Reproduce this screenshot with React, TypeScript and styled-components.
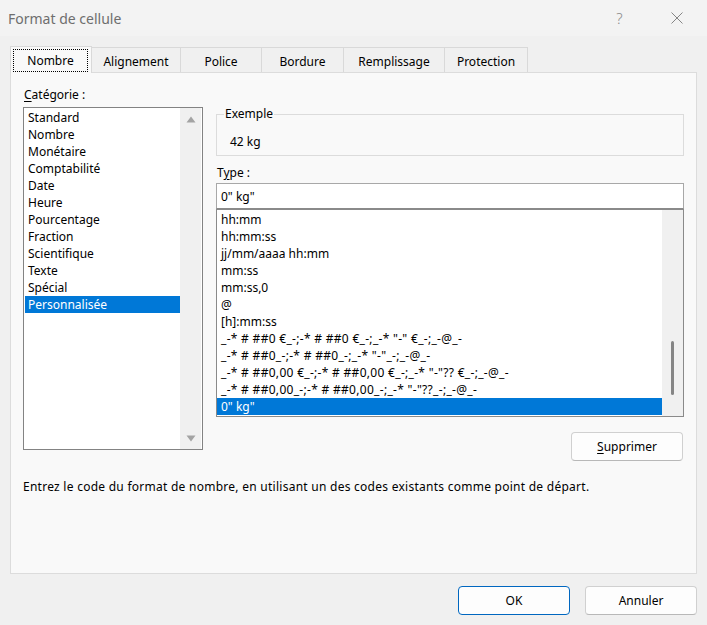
import React from "react";
import styled, {createGlobalStyle} from "styled-components";

const GlobalStyle = createGlobalStyle`
    html, body {
        margin: 0;
        padding: 0;
        background: #f0f0f0;
    }
    body {
        font-family: "Noto Sans", "Open Sans", sans-serif;
        font-size: 12px;
        color: #000;
    }
    * {
        box-sizing: border-box;
    }
`;

const Window = styled.div`
    width: 707px;
    height: 625px;
    display: flex;
    flex-direction: column;
    background: #f0f0f0;
    overflow: hidden;
`;

const TitleBar = styled.div`
    height: 36px;
    display: flex;
    align-items: center;
    padding: 0 2px 0 8px;
    background: #f3f3f3;
`;

const Title = styled.div`
    flex: 1;
    font-size: 14px;
    color: #6e6e6e;
`;

const TitleButton = styled.div`
    width: 57px;
    height: 36px;
    display: flex;
    align-items: center;
    justify-content: center;
    color: #8a8a8a;
    font-size: 15px;
    font-weight: 300;
`;

const TabRow = styled.div`
    height: 36px;
    display: flex;
    align-items: flex-end;
    padding: 10px 10px 0;
`;

const Tab = styled.div<{ $w: number; $active?: boolean }>`
    width: ${p => p.$w}px;
    height: ${p => (p.$active ? 27 : 25)}px;
    margin-bottom: ${p => (p.$active ? -1 : 0)}px;
    margin-left: ${p => (p.$active ? 0 : -1)}px;
    position: relative;
    z-index: ${p => (p.$active ? 2 : 1)};
    display: flex;
    align-items: ${p => (p.$active ? "stretch" : "center")};
    justify-content: center;
    padding-top: ${p => (p.$active ? 0 : 3)}px;
    background: ${p => (p.$active ? "#f9f9f9" : "#f0f0f0")};
    border: 1px solid #d9d9d9;
    border-bottom: none;
    line-height: 14px;
    &:first-child {
        margin-left: 0;
    }
`;

const FocusRing = styled.div`
    flex: 1;
    margin: 2px 3px 1px 2px;
    padding-top: 1px;
    border: 1px dotted #000;
    display: flex;
    align-items: center;
    justify-content: center;
`;

const Panel = styled.div`
    height: 502px;
    margin: 0 10px;
    border: 1px solid #dcdcdc;
    background: #f9f9f9;
    padding: 15px 12px 0 12px;
    display: grid;
    grid-template-columns: 180px 1fr;
    grid-template-rows: auto auto;
    column-gap: 13px;
    align-content: start;
`;

const LeftColumn = styled.div`
    display: flex;
    flex-direction: column;
`;

const RightColumn = styled.div`
    display: flex;
    flex-direction: column;
    padding-top: 19px;
`;

const Label = styled.div<{ $gapAbove?: number; $gapBelow: number }>`
    line-height: 14px;
    padding-left: 1px;
    margin-top: ${p => p.$gapAbove ?? 0}px;
    margin-bottom: ${p => p.$gapBelow}px;
`;

const U = styled.span`
    text-decoration: underline;
    text-underline-offset: 2px;
`;

const ListBox = styled.div<{ $h: number; $border: string }>`
    height: ${p => p.$h}px;
    border: 1px solid ${p => p.$border};
    background: #fff;
    display: flex;
`;

const ListItems = styled.div<{ $padLeft: number }>`
    flex: 1;
    padding: 1px 0 1px ${p => p.$padLeft}px;
    overflow: hidden;
`;

const Row = styled.div<{ $selected?: boolean; $indent: number; $spacing?: number }>`
    height: 17px;
    line-height: 17px;
    padding-left: ${p => p.$indent}px;
    white-space: pre;
    letter-spacing: ${p => p.$spacing ?? 0}px;
    background: ${p => (p.$selected ? "#0078d7" : "transparent")};
    color: ${p => (p.$selected ? "#fff" : "#000")};
`;

const ArrowTrack = styled.div`
    width: 21px;
    margin-right: 1px;
    background: #f0f0f0;
    display: flex;
    flex-direction: column;
    justify-content: space-between;
    align-items: center;
    padding: 8px 0 7px;
`;

const ThinTrack = styled.div`
    width: 21px;
    background: #f0f0f0;
    display: flex;
    justify-content: center;
`;

const Thumb = styled.div`
    width: 3px;
    height: 54px;
    margin-top: 131px;
    border-radius: 2px;
    background: #858585;
`;

const GroupBox = styled.fieldset`
    margin: 0;
    border: 1px solid #dcdcdc;
    padding: 14px 13px 6px;
    min-width: 0;
`;

const Legend = styled.legend`
    padding: 0 1px;
    margin-left: -6px;
    line-height: 14px;
`;

const Sample = styled.div`
    line-height: 14px;
`;

const TypeInput = styled.div`
    height: 26px;
    border: 1px solid #a8a8a8;
    border-bottom-color: #8a8a8a;
    background: #fff;
    display: flex;
    align-items: center;
    padding-left: 4px;
`;

const Button = styled.div<{ $primary?: boolean }>`
    width: 112px;
    height: 29px;
    border-radius: 4px;
    border: 1px solid ${p => (p.$primary ? "#0067c0" : "#d0d0d0")};
    border-bottom-color: ${p => (p.$primary ? "#0067c0" : "#b8b8b8")};
    background: #fdfdfd;
    display: flex;
    align-items: center;
    justify-content: center;
    line-height: 14px;
`;

const DeleteButton = styled(Button)`
    align-self: flex-end;
    margin-top: 15px;
    margin-right: 1px;
`;

const HelpText = styled.div`
    grid-column: 1 / span 2;
    margin-top: 18px;
    line-height: 16px;
    letter-spacing: 0.26px;
`;

const Footer = styled.div`
    flex: 1;
    display: flex;
    justify-content: flex-end;
    align-items: flex-start;
    gap: 15px;
    padding: 12px 10px 0 0;
`;

const categories = [
    "Standard", "Nombre", "Monétaire", "Comptabilité", "Date", "Heure",
    "Pourcentage", "Fraction", "Scientifique", "Texte", "Spécial", "Personnalisée",
];

const formats = [
    "hh:mm",
    "hh:mm:ss",
    "jj/mm/aaaa hh:mm",
    "mm:ss",
    "mm:ss,0",
    "@",
    "[h]:mm:ss",
    "_-* # ##0 €_-;-* # ##0 €_-;_-* \"-\" €_-;_-@_-",
    "_-* # ##0_-;-* # ##0_-;_-* \"-\"_-;_-@_-",
    "_-* # ##0,00 €_-;-* # ##0,00 €_-;_-* \"-\"?? €_-;_-@_-",
    "_-* # ##0,00_-;-* # ##0,00_-;_-* \"-\"??_-;_-@_-",
    "0\" kg\"",
];

const tabs = [
    {name: "Nombre", w: 82},
    {name: "Alignement", w: 90},
    {name: "Police", w: 82},
    {name: "Bordure", w: 83},
    {name: "Remplissage", w: 102},
    {name: "Protection", w: 84},
];

function Arrow({up}: { up?: boolean }) {
    return (
        <svg width="10" height="7" viewBox="0 0 10 7">
            <polygon points={up ? "0.5,6.5 9.5,6.5 5,0.5" : "0.5,0.5 9.5,0.5 5,6.5"} fill="#a3a3a3"/>
        </svg>
    );
}

function CloseIcon() {
    return (
        <svg width="12" height="12" viewBox="0 0 12 12">
            <path d="M0.5 0.5 L11.5 11.5 M11.5 0.5 L0.5 11.5" stroke="#858585" strokeWidth="1" fill="none"/>
        </svg>
    );
}

export default function App() {
    return (
        <Window>
            <GlobalStyle/>
            <TitleBar>
                <Title>Format de cellule</Title>
                <TitleButton>?</TitleButton>
                <TitleButton><CloseIcon/></TitleButton>
            </TitleBar>
            <TabRow>
                {tabs.map((t, idx) =>
                    idx === 0
                        ? <Tab key={t.name} $w={t.w} $active><FocusRing>{t.name}</FocusRing></Tab>
                        : <Tab key={t.name} $w={t.w}>{t.name}</Tab>
                )}
            </TabRow>
            <Panel>
                <LeftColumn>
                    <Label $gapBelow={5}><U>C</U>atégorie :</Label>
                    <ListBox $h={343} $border="#838383">
                        <ListItems $padLeft={1}>
                            {categories.map((c, idx) =>
                                <Row key={c} $indent={3} $selected={idx === categories.length - 1}>{c}</Row>
                            )}
                        </ListItems>
                        <ArrowTrack>
                            <Arrow up/>
                            <Arrow/>
                        </ArrowTrack>
                    </ListBox>
                </LeftColumn>
                <RightColumn>
                    <GroupBox>
                        <Legend>Exemple</Legend>
                        <Sample>42 kg</Sample>
                    </GroupBox>
                    <Label $gapAbove={10} $gapBelow={3}>T<U>y</U>pe :</Label>
                    <TypeInput>0" kg"</TypeInput>
                    <ListBox $h={208} $border="#8a8a8a">
                        <ListItems $padLeft={0}>
                            {formats.map((f, idx) =>
                                <Row key={f} $indent={4} $spacing={f.length > 20 ? 0.3 : 0}
                                     $selected={idx === formats.length - 1}>{f}</Row>
                            )}
                        </ListItems>
                        <ThinTrack>
                            <Thumb/>
                        </ThinTrack>
                    </ListBox>
                    <DeleteButton><U>S</U>upprimer</DeleteButton>
                </RightColumn>
                <HelpText>
                    Entrez le code du format de nombre, en utilisant un des codes existants comme point de départ.
                </HelpText>
            </Panel>
            <Footer>
                <Button $primary>OK</Button>
                <Button>Annuler</Button>
            </Footer>
        </Window>
    );
}
